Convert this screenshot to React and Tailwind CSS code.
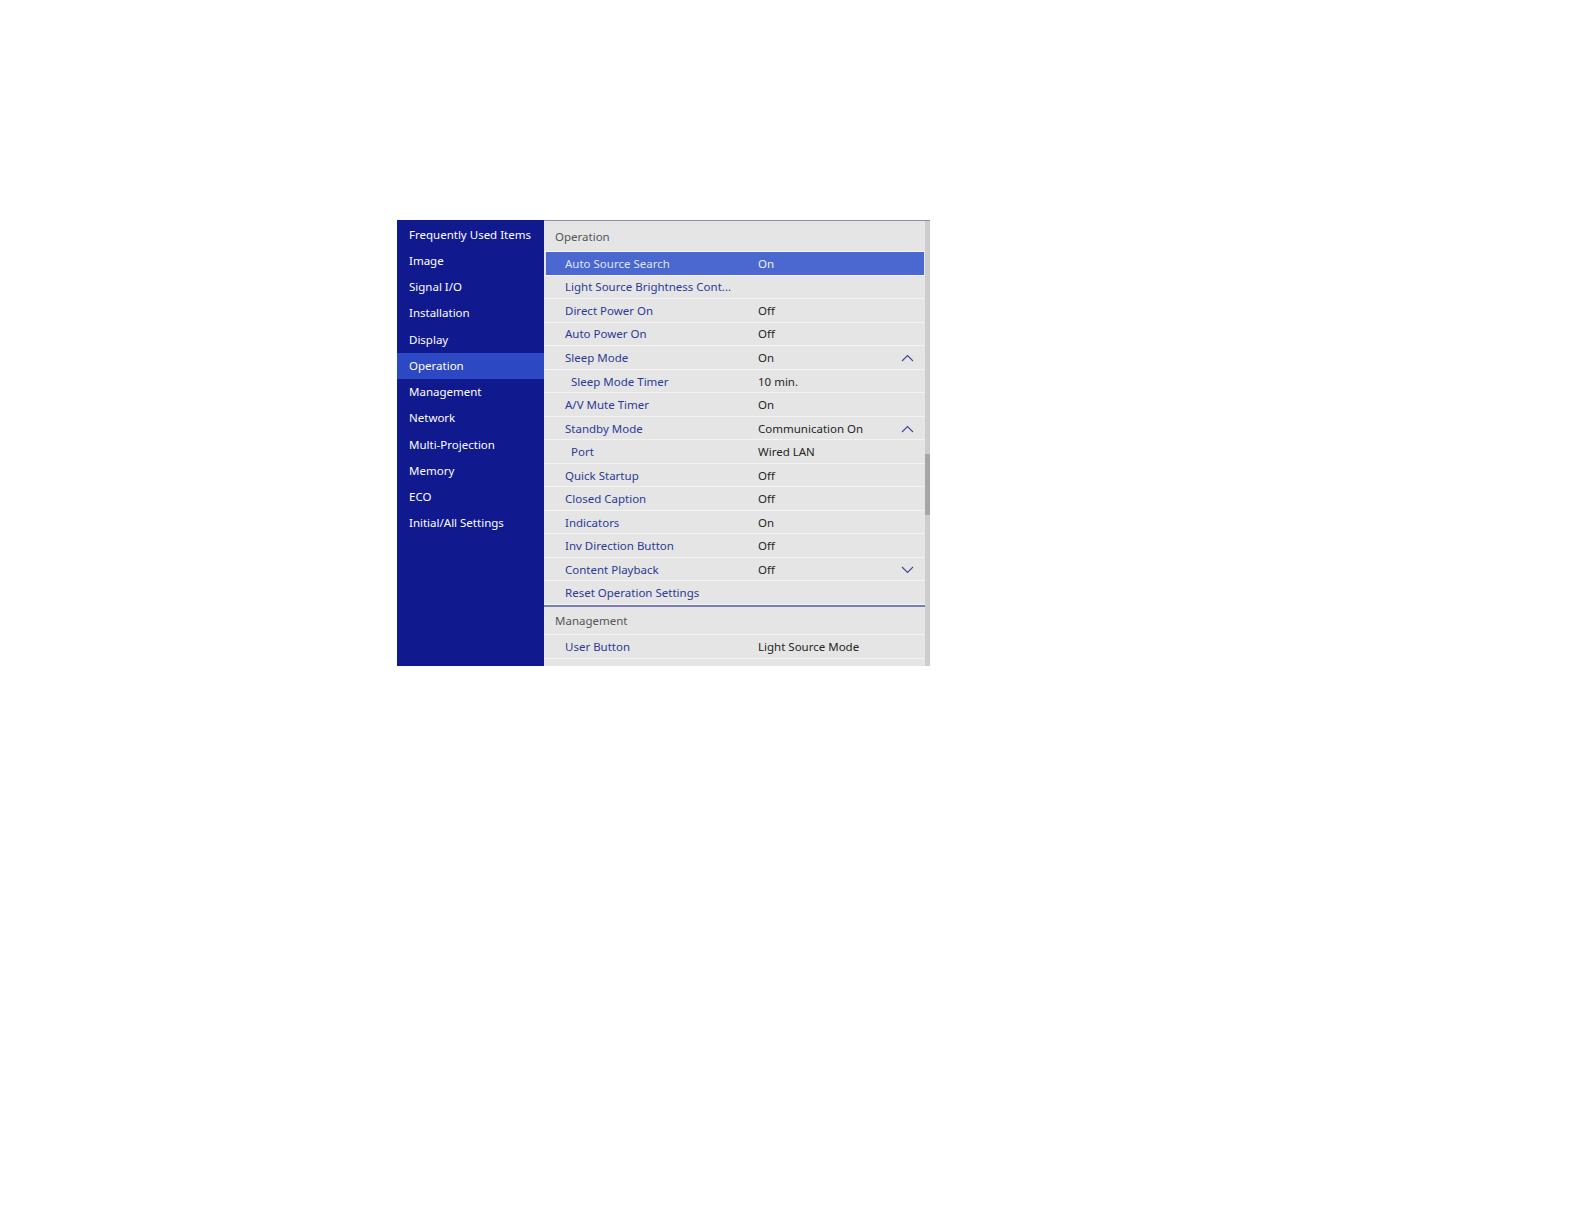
import React from "react";

const sideItems = [
  "Frequently Used Items",
  "Image",
  "Signal I/O",
  "Installation",
  "Display",
  "Operation",
  "Management",
  "Network",
  "Multi-Projection",
  "Memory",
  "ECO",
  "Initial/All Settings",
];

const opRows = [
  { label: "Auto Source Search", value: "On", selected: true },
  { label: "Light Source Brightness Cont..." },
  { label: "Direct Power On", value: "Off" },
  { label: "Auto Power On", value: "Off" },
  { label: "Sleep Mode", value: "On", chevron: "up" },
  { label: "Sleep Mode Timer", value: "10 min.", sub: true },
  { label: "A/V Mute Timer", value: "On" },
  { label: "Standby Mode", value: "Communication On", chevron: "up" },
  { label: "Port", value: "Wired LAN", sub: true },
  { label: "Quick Startup", value: "Off" },
  { label: "Closed Caption", value: "Off" },
  { label: "Indicators", value: "On" },
  { label: "Inv Direction Button", value: "Off" },
  { label: "Content Playback", value: "Off", chevron: "down" },
  { label: "Reset Operation Settings" },
];

function Chevron({ dir, color }) {
  return (
    <svg width="13" height="8" viewBox="0 0 13 8" fill="none">
      {dir === "up" ? (
        <path d="M1 7 L6.5 1.5 L12 7" stroke={color} strokeWidth="1.1" />
      ) : (
        <path d="M1 1 L6.5 6.5 L12 1" stroke={color} strokeWidth="1.1" />
      )}
    </svg>
  );
}

function Row({ r }) {
  return (
    <div className="h-[23.52px] border-b border-[#f3f3f3] flex">
      <div
        className={
          "flex-1 flex items-center pt-[1px] " +
          (r.selected ? "bg-[#4a68cf] ml-[2px] mr-[1px]" : "")
        }
      >
        <div
          className={
            "shrink-0 whitespace-nowrap " +
            (r.selected
              ? "w-[212px] pl-[19px] text-[#dde4ff]"
              : r.sub
              ? "w-[214px] pl-[27px] text-[#2b3a96]"
              : "w-[214px] pl-[21px] text-[#2b3a96]")
          }
        >
          {r.label}
        </div>
        <div
          className={
            "flex-1 whitespace-nowrap " +
            (r.selected ? "text-[#eef1ff]" : "text-[#262626]")
          }
        >
          {r.value || ""}
        </div>
        <div className="w-[36px] flex justify-center">
          {r.chevron && <Chevron dir={r.chevron} color="#3b4590" />}
        </div>
      </div>
    </div>
  );
}

export default function App() {
  return (
    <div
      className="min-h-[1224px] bg-white pt-[220px] pl-[397px]"
      style={{ fontFamily: '"Noto Sans", "Open Sans", sans-serif' }}
    >
      <div className="w-[533px] h-[446px] flex overflow-hidden text-[11.5px] leading-[16px]">
        <div className="w-[147px] shrink-0 bg-[#10198e] pt-[1.5px]">
          {sideItems.map((s) => (
            <div
              key={s}
              className={
                "h-[26.25px] flex items-center pl-[12px] text-white whitespace-nowrap " +
                (s === "Operation" ? "bg-[#2c48c2]" : "")
              }
            >
              {s}
            </div>
          ))}
        </div>
        <div className="flex-1 flex bg-[#e5e5e5] border-t border-[#8a8ab0]">
          <div className="flex-1 overflow-hidden">
            <div className="h-[31.2px] pt-[1px] flex items-center pl-[11px] text-[#555] border-b border-[#f3f3f3]">
              Operation
            </div>
            {opRows.map((r) => (
              <Row key={r.label} r={r} />
            ))}
            <div className="h-[2px] bg-[#7c7cb8]" />
            <div className="h-[28.2px] pt-[1px] flex items-center pl-[11px] text-[#555] border-b border-[#f3f3f3]">
              Management
            </div>
            <Row r={{ label: "User Button", value: "Light Source Mode" }} />
            <Row r={{ label: "User Logo", value: "" }} />
          </div>
          <div className="w-[5px] shrink-0 bg-[#cdcdcd] flex flex-col">
            <div className="h-[233px] shrink-0" />
            <div className="h-[61px] shrink-0 bg-[#a6a6a6]" />
          </div>
        </div>
      </div>
    </div>
  );
}
